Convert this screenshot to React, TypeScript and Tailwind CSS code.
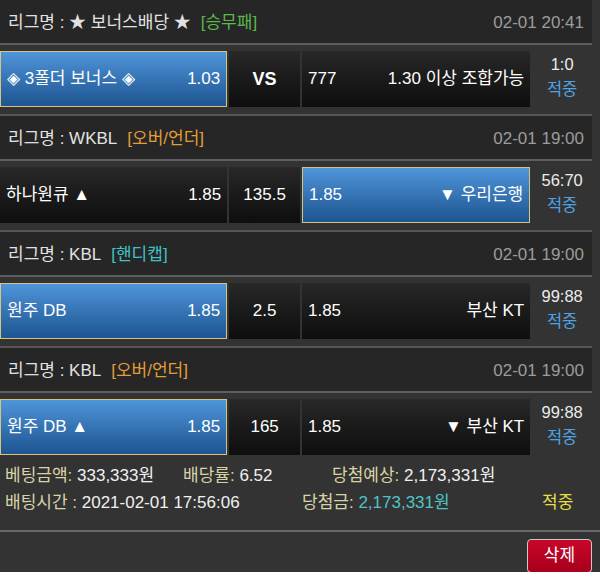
import React from "react";

type Bet = {
  league: string;
  tag: string;
  tagColor: string;
  date: string;
  home: string;
  homeOdd: string;
  mid: string;
  midBold?: boolean;
  awayOdd: string;
  away: string;
  pick: "home" | "away";
  score: string;
};

const bets: Bet[] = [
  {
    league: "★ 보너스배당 ★",
    tag: "[승무패]",
    tagColor: "text-[#5cb84a]",
    date: "02-01 20:41",
    home: "◈ 3폴더 보너스 ◈",
    homeOdd: "1.03",
    mid: "VS",
    midBold: true,
    awayOdd: "777",
    away: "1.30 이상 조합가능",
    pick: "home",
    score: "1:0",
  },
  {
    league: "WKBL",
    tag: "[오버/언더]",
    tagColor: "text-[#e39d36]",
    date: "02-01 19:00",
    home: "하나원큐 ▲",
    homeOdd: "1.85",
    mid: "135.5",
    awayOdd: "1.85",
    away: "▼ 우리은행",
    pick: "away",
    score: "56:70",
  },
  {
    league: "KBL",
    tag: "[핸디캡]",
    tagColor: "text-[#3fc2c6]",
    date: "02-01 19:00",
    home: "원주 DB",
    homeOdd: "1.85",
    mid: "2.5",
    awayOdd: "1.85",
    away: "부산 KT",
    pick: "home",
    score: "99:88",
  },
  {
    league: "KBL",
    tag: "[오버/언더]",
    tagColor: "text-[#e39d36]",
    date: "02-01 19:00",
    home: "원주 DB ▲",
    homeOdd: "1.85",
    mid: "165",
    awayOdd: "1.85",
    away: "▼ 부산 KT",
    pick: "home",
    score: "99:88",
  },
];

const picked =
  "border-[1.5px] border-[#d8c37f] bg-linear-to-b from-[#4f95da] to-[#1d5591]";
const plain = "bg-linear-to-b from-[#282828] to-[#0e0e0e]";

function BetSection({ bet, first }: { bet: Bet; first: boolean }) {
  return (
    <section>
      <div
        className={`flex items-center justify-between bg-[#262626] px-2 pt-[2px] text-[17px] ${
          first ? "h-[43px]" : "h-[45px] border-t-2 border-[#565656]"
        }`}
      >
        <p className="text-[#e2e2e2]">
          리그명 : {bet.league}
          <span className={`ml-[10px] ${bet.tagColor}`}>{bet.tag}</span>
        </p>
        <span className="text-[#9c9c9c]">{bet.date}</span>
      </div>
      <div className="h-[2px] bg-[#5e5e5e]" />
      <div className="flex h-[69px] gap-[2px] pt-[6px] pb-[7px] text-[17px] text-white">
        <div
          className={`flex h-[56px] w-[228px] items-center justify-between px-[6px] ${
            bet.pick === "home" ? picked : plain
          }`}
        >
          <span>{bet.home}</span>
          <span>{bet.homeOdd}</span>
        </div>
        <div
          className={`flex h-[56px] w-[71px] items-center justify-center ${plain} ${
            bet.midBold ? "text-[18px] font-bold" : ""
          }`}
        >
          {bet.mid}
        </div>
        <div
          className={`flex h-[56px] w-[229px] items-center justify-between px-[6px] ${
            bet.pick === "away" ? picked : plain
          }`}
        >
          <span>{bet.awayOdd}</span>
          <span>{bet.away}</span>
        </div>
        <div className="flex h-[56px] w-[60px] flex-col items-center justify-center pb-[5px] text-[16.5px] leading-[25px]">
          <span className="text-[#ececec]">{bet.score}</span>
          <span className="text-[#4fa3e4]">적중</span>
        </div>
      </div>
    </section>
  );
}

export default function App() {
  return (
    <div
      className="h-[572px] w-[600px] overflow-hidden bg-[#333333]"
      style={{ fontFamily: '"Liberation Sans", "Noto Sans CJK KR", sans-serif' }}
    >
      <div className="w-[592px]">
        {bets.map((bet, i) => (
          <BetSection key={i} bet={bet} first={i === 0} />
        ))}
      </div>
      <div className="h-[68px] px-[5px] text-[17px] leading-[27px] text-[#f0f0f0]">
        <div className="flex">
          <p className="w-[178px]">
            <span className="text-[#d9d3a8]">베팅금액: </span>333,333원
          </p>
          <p className="w-[149px]">
            <span className="text-[#d9d3a8]">배당률: </span>6.52
          </p>
          <p>
            <span className="text-[#d9d3a8]">당첨예상: </span>2,173,331원
          </p>
        </div>
        <div className="flex">
          <p className="w-[297px]">
            <span className="text-[#d9d3a8]">배팅시간 : </span>2021-02-01 17:56:06
          </p>
          <p className="w-[240px]">
            <span className="text-[#d9d3a8]">당첨금: </span>
            <span className="text-[#4fc3c8]">2,173,331원</span>
          </p>
          <span className="text-[#e6df45]">적중</span>
        </div>
      </div>
      <div className="h-[2px] bg-[#6a6a6a]" />
      <div className="flex justify-end pt-[7px] pr-[8px]">
        <button className="h-[34px] w-[65px] rounded-[4px] border border-[#c9c9c9] bg-linear-to-b from-[#c8062a] to-[#a8001c] text-[17px] text-white">
          삭제
        </button>
      </div>
    </div>
  );
}
